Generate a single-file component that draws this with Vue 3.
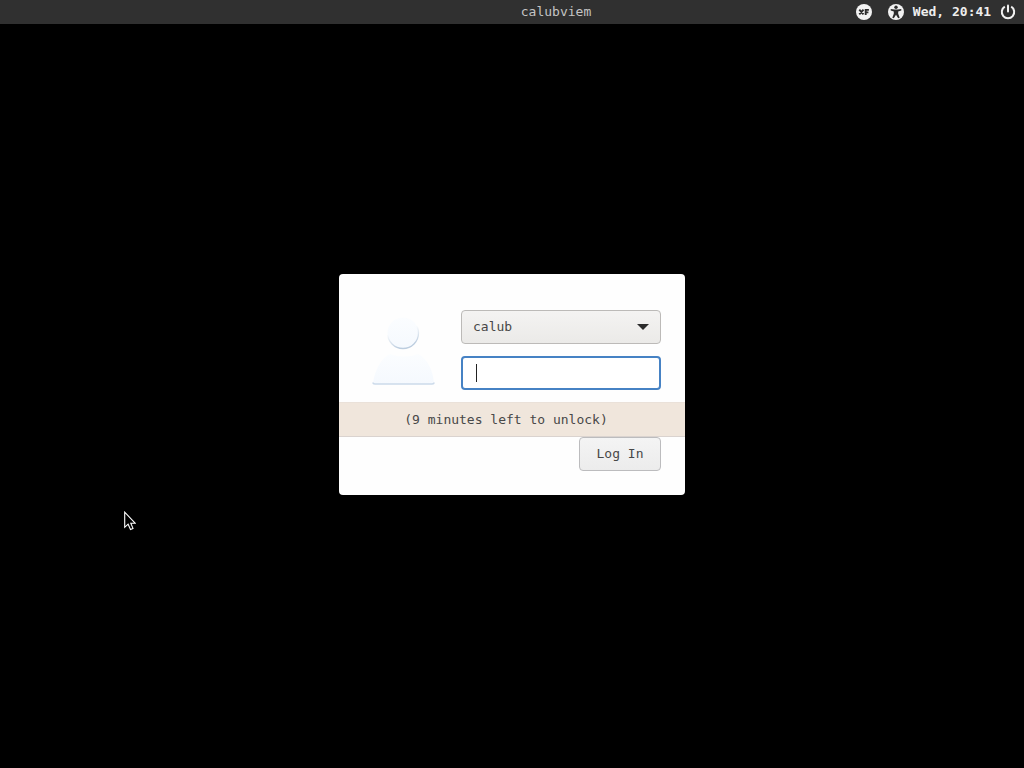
<script setup>
import { ref } from 'vue'

const user = ref('calub')
const password = ref('')
</script>

<template>
  <div class="screen">
    <header class="panel">
      <span class="host">calubviem</span>
      <div class="indicators">
        <button class="indicator session" type="button" aria-label="Session">
          <svg width="16" height="16" viewBox="0 0 16 16">
            <circle cx="8" cy="8" r="8" fill="#f2f2f2" />
            <path d="M3.3 5.6 7.5 10.4M7.5 5.6 3.3 10.4M9.7 10.9V5.9h3.2M9.6 8.4h2.8" fill="none" stroke="#2c2c2c" stroke-width="1.9" />
          </svg>
        </button>
        <button class="indicator" type="button" aria-label="Accessibility">
          <svg width="16" height="16" viewBox="0 0 16 16">
            <circle cx="8" cy="8" r="8" fill="#f2f2f2" />
            <circle cx="8" cy="3.2" r="1.7" fill="#2c2c2c" />
            <path d="M2.7 5 6.5 5.5h3l3.8-.5v1.6L10.2 7.5v2.2l1.5 4-1.5.6L8 10.8l-2.2 3.5-1.5-.6 1.5-4V7.5L2.7 6.6z" fill="#2c2c2c" />
          </svg>
        </button>
        <time class="clock">Wed, 20:41</time>
        <button class="indicator" type="button" aria-label="Power">
          <svg width="16" height="16" viewBox="0 0 16 16" fill="none" stroke="#f2f2f2" stroke-width="2">
            <path d="M4.8 2.7A6.2 6.2 0 1 0 11.2 2.7" />
            <path d="M8 1.5V7.5" stroke-linecap="round" />
          </svg>
        </button>
      </div>
    </header>

    <main class="stage">
      <form class="dialog" @submit.prevent>
        <div class="credentials">
          <svg class="avatar" width="64" height="70" viewBox="0 0 64 70">
            <defs>
              <linearGradient id="skin" x1="0" y1="0" x2="0" y2="1">
                <stop offset="0" stop-color="#fbfdff" />
                <stop offset="1" stop-color="#f5f9fe" />
              </linearGradient>
              <linearGradient id="rim" x1="0" y1="0" x2="0.3" y2="1">
                <stop offset="0.5" stop-color="#c4d3e4" stop-opacity="0" />
                <stop offset="1" stop-color="#bccddf" />
              </linearGradient>
            </defs>
            <path d="M1 67C3 54 9 42 18 38Q32 43 46 38C55 42 61 54 62 67Q62 68 60 68H3Q1 68 1 67z" fill="url(#skin)" />
            <path d="M1 66.5Q1 68 3 68H60Q62 68 62 66.5" fill="none" stroke="#ccdaea" stroke-width="1.5" />
            <circle cx="31" cy="17" r="15.5" fill="url(#skin)" stroke="url(#rim)" stroke-width="1.3" />
          </svg>
          <div class="fields">
            <div class="control">
              <select v-model="user" class="field user" aria-label="User">
                <option value="calub">calub</option>
              </select>
              <svg class="arrow" width="12" height="6" viewBox="0 0 12 6"><path d="M0 0h12L6 6z" fill="#2c2c2c" /></svg>
            </div>
            <div class="control">
              <input v-model="password" class="field password" type="password" aria-label="Password" />
              <span class="caret"></span>
            </div>
          </div>
        </div>
        <p class="notice">(9 minutes left to unlock)</p>
        <div class="actions">
          <button class="login" type="submit">Log In</button>
        </div>
      </form>
    </main>

    <svg class="pointer" width="12" height="20" viewBox="0 0 12 20">
      <path d="M.7 1.2V16.3L4.1 13.2 6.5 18.5 9 17.4 6.8 12.2H11.1z" fill="#000" stroke="#fff" stroke-width="1.1" />
    </svg>
  </div>
</template>

<style>
body {
  margin: 0;
  background: #000;
}
</style>

<style scoped>
.screen {
  position: relative;
  display: grid;
  grid-template-rows: 24px 1fr 24px;
  min-height: 100vh;
  overflow: hidden;
  background: #000;
  color: #484848;
  font-family: "DejaVu Sans Mono", "Liberation Mono", monospace;
  font-size: 13px;
  line-height: 24px;
}

.panel {
  display: grid;
  grid-template-columns: 1fr auto 1fr;
  align-items: center;
  padding-left: 88px;
  background: #303030;
}

.host {
  grid-column: 2;
  color: #c4c4c4;
}

.indicators {
  display: flex;
  align-items: center;
  justify-content: flex-end;
  gap: 8px;
  padding-right: 8px;
}

.indicator {
  display: flex;
  padding: 0;
  border: 0;
  background: none;
}

.session {
  margin-right: 8px;
}

.clock {
  width: 80px;
  color: #eee;
  font-weight: 700;
  text-align: center;
}

.stage {
  display: flex;
  align-items: center;
  justify-content: center;
}

.dialog {
  box-sizing: border-box;
  width: 346px;
  padding: 36px 0 24px;
  border-radius: 4px;
  background: #fefefe;
}

.credentials {
  display: flex;
  justify-content: space-between;
  padding: 0 24px 12px 33px;
}

.avatar {
  margin-top: 6px;
}

.fields {
  display: grid;
  gap: 12px;
  width: 200px;
}

.control {
  position: relative;
  display: flex;
}

.field {
  box-sizing: border-box;
  width: 100%;
  height: 34px;
  margin: 0;
  padding: 0 12px;
  border-radius: 4px;
  color: #484848;
  font: inherit;
  outline: none;
}

.user {
  appearance: none;
  padding: 0 11px;
  border: 1px solid #bcbab8;
  background: linear-gradient(#f4f3f2, #ebeae8);
}

.password {
  border: 2px solid #4682c4;
  background: #fff;
  caret-color: transparent;
}

.arrow {
  position: absolute;
  top: 14px;
  right: 12px;
  pointer-events: none;
}

.caret {
  position: absolute;
  top: 8px;
  left: 15px;
  width: 1px;
  height: 18px;
  background: #222;
}

.notice {
  box-sizing: border-box;
  height: 35px;
  margin: 0;
  padding-right: 12px;
  border-top: 1px solid #eae1d9;
  border-bottom: 1px solid #dad3cf;
  background: #f0e6dc;
  line-height: 33px;
  text-align: center;
}

.actions {
  display: flex;
  justify-content: flex-end;
  padding: 0 24px;
}

.login {
  width: 82px;
  height: 34px;
  padding: 0;
  border: 1px solid #bcbcbe;
  border-radius: 4px;
  background: linear-gradient(#f4f4f4, #ececec);
  color: #484848;
  font: inherit;
}

.pointer {
  position: absolute;
  top: 511px;
  left: 124px;
  pointer-events: none;
}
</style>
